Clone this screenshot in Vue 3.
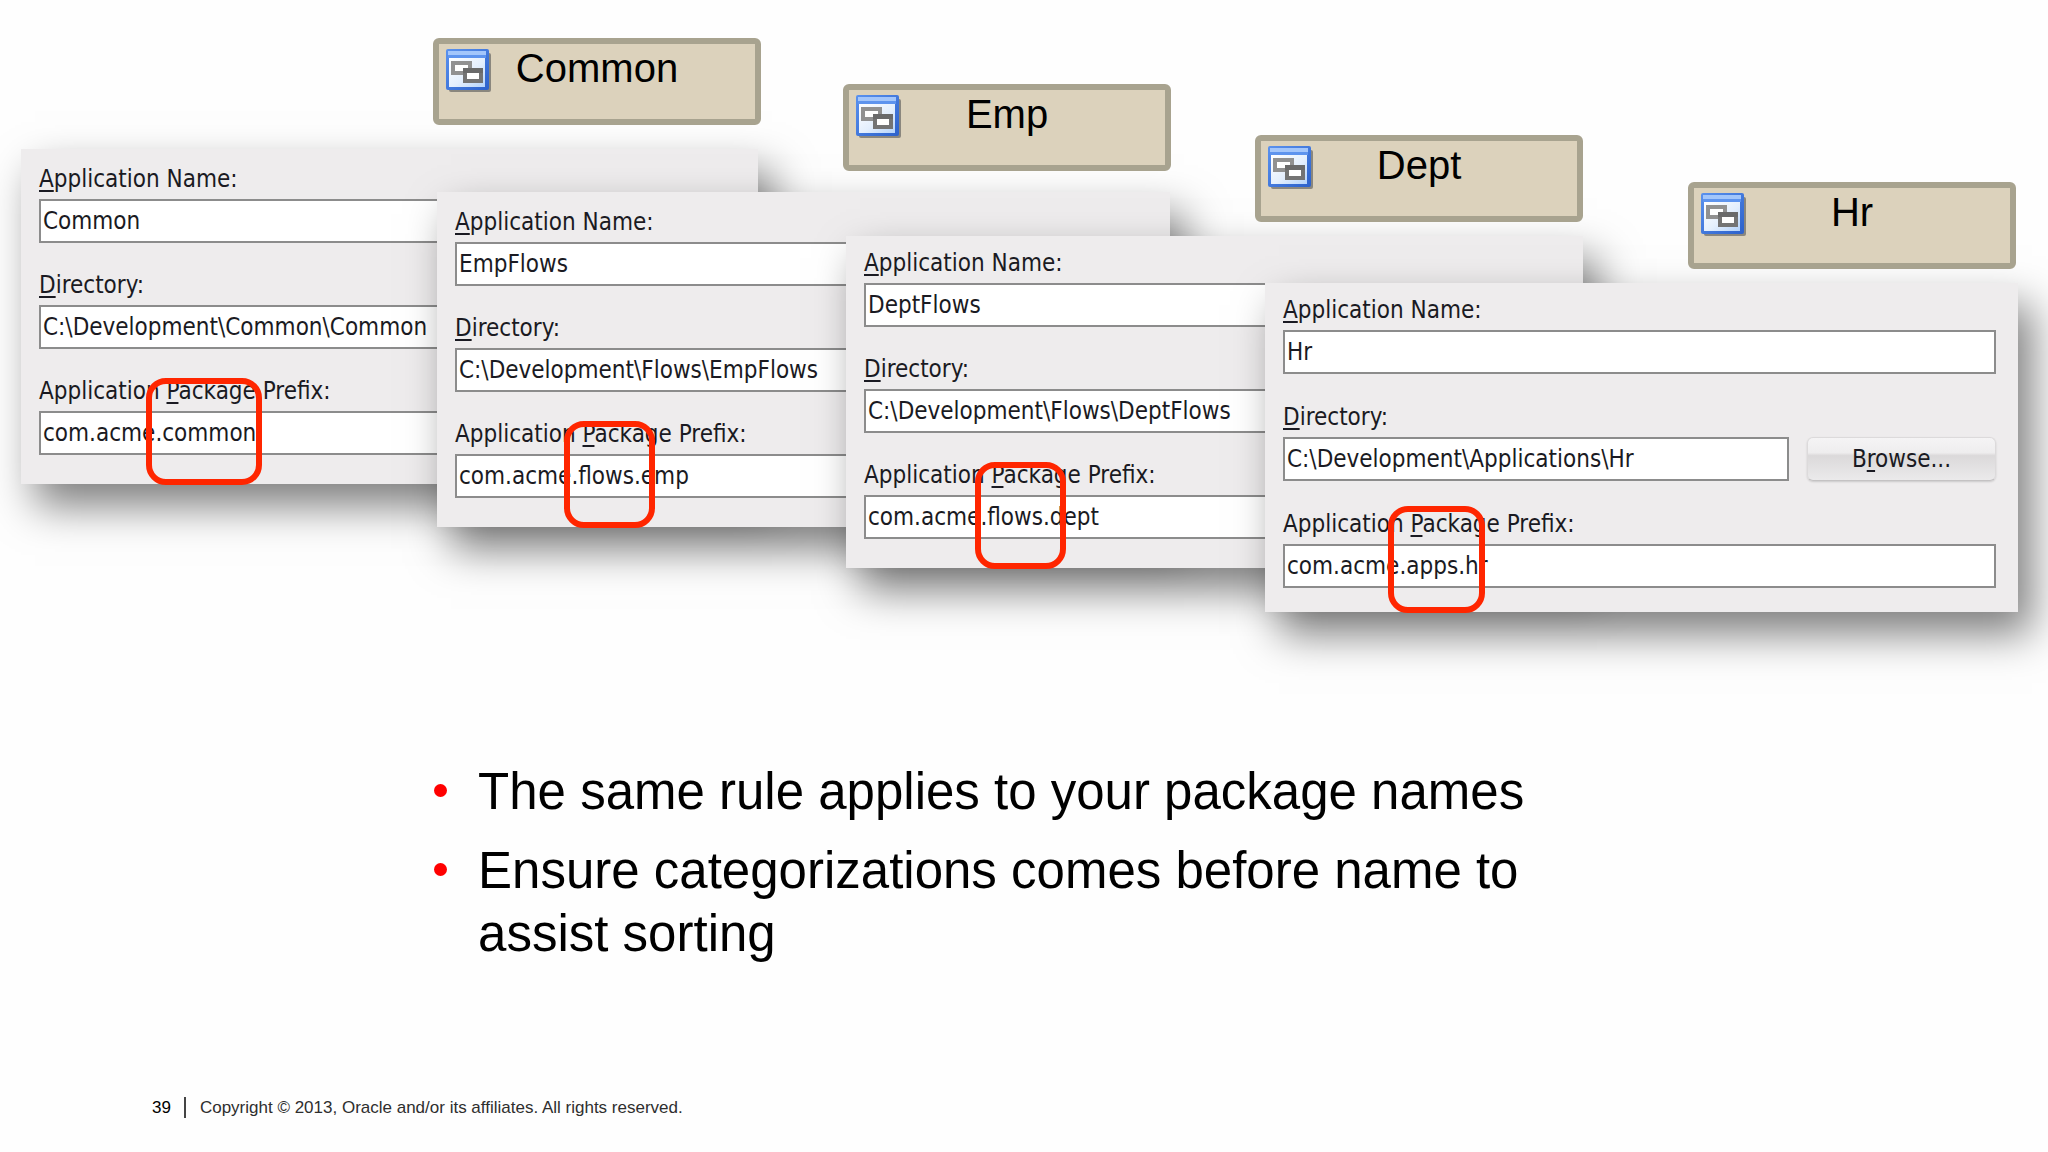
<template>
  <main class="slide">
    <div class="stage">
      <form
        v-for="win in panels"
        :key="win.id"
        class="panel"
        :class="win.spacing"
        :style="place(win)"
        @submit.prevent
      >
        <div class="field">
          <label :for="win.id + '-name'"><u>A</u>pplication Name:</label>
          <input :id="win.id + '-name'" v-model="win.name" type="text" spellcheck="false" />
        </div>
        <div class="field">
          <label :for="win.id + '-dir'"><u>D</u>irectory:</label>
          <div class="field-row">
            <input :id="win.id + '-dir'" v-model="win.dir" type="text" spellcheck="false" />
            <button v-if="win.browse" type="button" class="browse">B<u>r</u>owse...</button>
          </div>
        </div>
        <div class="field">
          <label :for="win.id + '-pkg'">Application <u>P</u>ackage Prefix:</label>
          <input :id="win.id + '-pkg'" v-model="win.prefix" type="text" spellcheck="false" />
        </div>
        <span class="highlight" :style="{ left: win.mark.left + 'px', width: win.mark.width + 'px' }"></span>
      </form>

      <div v-for="tag in tags" :key="tag.text" class="tag" :style="place(tag)">
        <svg class="tag-icon" viewBox="0 0 46 44" aria-hidden="true">
          <defs>
            <linearGradient id="winBody" x1="0" y1="0" x2="1" y2="1">
              <stop offset="0" stop-color="#ffffff" />
              <stop offset="0.55" stop-color="#e4effd" />
              <stop offset="1" stop-color="#b4d3fb" />
            </linearGradient>
            <linearGradient id="winEdge" x1="0" y1="0" x2="1" y2="1">
              <stop offset="0" stop-color="#5b92ee" />
              <stop offset="1" stop-color="#2c61cb" />
            </linearGradient>
          </defs>
          <rect x="3" y="4" width="42" height="39" rx="2" fill="#6f6d69" opacity="0.75" />
          <rect x="0" y="0" width="43" height="41" rx="2" fill="url(#winEdge)" />
          <rect x="2" y="2" width="38" height="4" fill="#a3c6fb" />
          <rect x="2" y="6" width="38" height="3" fill="#5e94ee" />
          <rect x="3" y="9" width="36" height="29" fill="url(#winBody)" />
          <rect x="7" y="14" width="17" height="10" fill="#ffffff" stroke="#919191" stroke-width="4" />
          <rect x="19" y="22" width="16" height="10" fill="#ffffff" stroke="#747474" stroke-width="4" />
          <path d="M17 21.500h20" stroke="#6a6a6a" stroke-width="5" />
        </svg>
        <span class="tag-text">{{ tag.text }}</span>
      </div>
    </div>

    <ul class="points">
      <li v-for="point in points" :key="point">{{ point }}</li>
    </ul>

    <footer class="footer">
      <span class="page-number">39</span>
      <span class="copyright">Copyright © 2013, Oracle and/or its affiliates. All rights reserved.</span>
    </footer>
  </main>
</template>

<script setup>
import { ref } from 'vue';

// Horizontal values are in slide units and scale with the window
const SLIDE_WIDTH = 2048;

const panels = ref([
  {
    id: 'common',
    x: 21,
    y: 149,
    w: 737,
    spacing: 'roomy',
    name: 'Common',
    dir: 'C:\\Development\\Common\\Common',
    prefix: 'com.acme.common',
    mark: { left: 125, width: 116 }
  },
  {
    id: 'emp',
    x: 437,
    y: 192,
    w: 733,
    spacing: 'roomy',
    name: 'EmpFlows',
    dir: 'C:\\Development\\Flows\\EmpFlows',
    prefix: 'com.acme.flows.emp',
    mark: { left: 127, width: 91 }
  },
  {
    id: 'dept',
    x: 846,
    y: 236,
    w: 737,
    name: 'DeptFlows',
    dir: 'C:\\Development\\Flows\\DeptFlows',
    prefix: 'com.acme.flows.dept',
    mark: { left: 129, width: 91 }
  },
  {
    id: 'hr',
    x: 1265,
    y: 283,
    w: 753,
    spacing: 'front',
    name: 'Hr',
    dir: 'C:\\Development\\Applications\\Hr',
    prefix: 'com.acme.apps.hr',
    browse: true,
    mark: { left: 123, width: 97 }
  }
]);

const tags = [
  { text: 'Common', x: 433, y: 38, w: 328 },
  { text: 'Emp', x: 843, y: 84, w: 328 },
  { text: 'Dept', x: 1255, y: 135, w: 328 },
  { text: 'Hr', x: 1688, y: 182, w: 328 }
];

const points = [
  'The same rule applies to your package names',
  'Ensure categorizations comes before name to assist sorting'
];

const place = (item) => ({
  left: `${(item.x / SLIDE_WIDTH) * 100}%`,
  top: `${item.y}px`,
  width: `${(item.w / SLIDE_WIDTH) * 100}%`
});
</script>

<style>
body {
  background: #fefefe;
}
</style>

<style scoped>
.slide {
  display: flex;
  flex-direction: column;
  min-height: 100vh;
  box-sizing: border-box;
  overflow: hidden;
  font-family: "Liberation Sans", Arial, sans-serif;
  color: #000;
}

/* Free canvas for the overlapping windows */
.stage {
  position: relative;
  height: 760px;
}

.panel {
  position: absolute;
  display: flex;
  flex-direction: column;
  gap: 28px;
  box-sizing: border-box;
  padding: 13px 22px 29px 18px;
  background: #eeeced;
  box-shadow: 14px 22px 40px rgba(0, 0, 0, 0.5);
  font-family: "DejaVu Sans Condensed", "DejaVu Sans", sans-serif;
  font-size: 24px;
  color: #1a1a22;
}

.panel.roomy {
  padding-top: 16px;
}

.panel.front {
  gap: 29px;
  padding-bottom: 24px;
}

.field {
  display: flex;
  flex-direction: column;
  gap: 6px;
}

.field label {
  line-height: 28px;
}

.field u,
.browse u {
  text-decoration-thickness: 2px;
  text-underline-offset: 3px;
}

.field-row {
  display: flex;
  align-items: center;
  gap: 18px;
}

.field input {
  flex: 1;
  min-width: 0;
  box-sizing: border-box;
  height: 44px;
  min-height: 44px;
  padding: 0 2px 1px;
  border: 2px solid #8c8c8c;
  border-radius: 0;
  background: #fff;
  font: inherit;
  color: inherit;
}

.browse {
  width: 189px;
  height: 44px;
  padding: 0;
  border: 1px solid #dcdadb;
  border-bottom-color: #c4c2c3;
  border-radius: 6px;
  background: linear-gradient(#f5f4f5 0%, #eeedee 35%, #dbd9da 42%, #ebeaeb 100%);
  box-shadow: 0 1px 2px rgba(0, 0, 0, 0.15);
  font: inherit;
  color: inherit;
}

.highlight {
  position: absolute;
  bottom: -1px;
  height: 107px;
  box-sizing: border-box;
  border: 6px solid #ff2600;
  border-radius: 20px;
  pointer-events: none;
}

.tag {
  position: absolute;
  box-sizing: border-box;
  height: 87px;
  border: 6px solid #a8a38f;
  border-radius: 6px;
  background: #dcd2bc;
  text-align: center;
}

.tag-icon {
  position: absolute;
  left: 7px;
  top: 5px;
  width: 46px;
  height: 44px;
}

.tag-text {
  font-size: 40px;
  line-height: 48px;
}

.points {
  width: 56%;
  margin: 0 0 0 21%;
  padding: 0;
  list-style: none;
  font-size: 51px;
  line-height: 63px;
}

.points li {
  position: relative;
  margin-bottom: 16px;
  padding-left: 48px;
}

.points li::before {
  content: "";
  position: absolute;
  left: 4px;
  top: 24px;
  width: 13px;
  height: 13px;
  border-radius: 50%;
  background: #f00;
}

.footer {
  display: flex;
  align-items: center;
  margin-top: auto;
  padding: 0 0 34px 152px;
  font-size: 17px;
  line-height: 21px;
}

.page-number {
  padding-right: 13px;
  border-right: 2px solid #444;
}

.copyright {
  padding-left: 14px;
  color: #2e2e2e;
}
</style>
